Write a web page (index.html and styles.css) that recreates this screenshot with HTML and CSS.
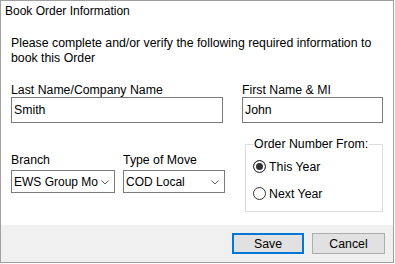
FILE: index.html
```html
<!DOCTYPE html>
<html lang="en">
<head>
    <meta charset="UTF-8">
    <meta name="viewport" content="width=device-width, initial-scale=1.0">
    <title>Book Order Information</title>
    <link rel="stylesheet" href="styles.css">
</head>
<body>
    <div class="dialog">
        <div class="title">Book Order Information</div>
        <div class="content">
            <p class="intro">Please complete and/or verify the following required information to book this Order</p>
            <div class="row row-names">
                <div class="field field-last">
                    <label class="label">Last Name/Company Name</label>
                    <input class="text-input" type="text" value="Smith">
                </div>
                <div class="field field-first">
                    <label class="label">First Name &amp; MI</label>
                    <input class="text-input" type="text" value="John">
                </div>
            </div>
            <div class="row row-details">
                <div class="field field-branch">
                    <label class="label label-select">Branch</label>
                    <div class="select">
                        <span class="select-text">EWS Group Mo</span>
                        <svg class="chevron" width="8" height="5" viewBox="0 0 8 5"><path d="M0.5 0.5 L4 4 L7.5 0.5" fill="none" stroke="#606060" stroke-width="1"/></svg>
                    </div>
                </div>
                <div class="field field-move">
                    <label class="label label-select">Type of Move</label>
                    <div class="select">
                        <span class="select-text">COD Local</span>
                        <svg class="chevron" width="8" height="5" viewBox="0 0 8 5"><path d="M0.5 0.5 L4 4 L7.5 0.5" fill="none" stroke="#606060" stroke-width="1"/></svg>
                    </div>
                </div>
                <fieldset class="order-from">
                    <legend>Order Number From:</legend>
                    <label class="radio-row"><input class="radio" type="radio" name="year" checked>This Year</label>
                    <label class="radio-row"><input class="radio" type="radio" name="year">Next Year</label>
                </fieldset>
            </div>
        </div>
        <div class="footer">
            <button class="btn btn-default">Save</button>
            <button class="btn">Cancel</button>
        </div>
    </div>
</body>
</html>
```

FILE: styles.css
```css
body{
    margin: 0;
    font-family: "Liberation Sans", Arial, sans-serif;
    font-size: 12.3px;
    color: #000;
    background-color: #fff;
}
.dialog{
    width: 394px;
    height: 263px;
    box-sizing: border-box;
    border: 1px solid #a0a0a0;
    display: flex;
    flex-direction: column;
    background-color: #fff;
}
.title{
    padding: 3px 4px 0;
    line-height: 15px;
    font-size: 12px;
}
.content{
    flex: 1;
    padding: 0 10px;
}
.intro{
    margin: 17px 0 0;
    line-height: 15px;
    width: 372px;
}
.row{
    display: flex;
    align-items: flex-start;
}
.row-names{
    margin-top: 18px;
    gap: 19px;
}
.row-details{
    margin-top: 14px;
}
.field{
    display: flex;
    flex-direction: column;
}
.label{
    line-height: 13px;
}
.label-select{
    margin-bottom: 4px;
}
.field-last{
    width: 214px;
}
.field-first{
    width: 141px;
}
.text-input{
    height: 26px;
    box-sizing: border-box;
    border: 1px solid #7a7a7a;
    padding: 0 2px;
    margin: 0;
    font: inherit;
    color: #000;
    outline: none;
}
.field-branch{
    width: 105px;
    margin-top: 17px;
}
.field-move{
    width: 103px;
    margin-top: 17px;
    margin-left: 8px;
}
.select{
    height: 23px;
    box-sizing: border-box;
    border: 1px solid #7a7a7a;
    display: flex;
    align-items: center;
    justify-content: space-between;
    padding: 0 5px 0 2px;
    font-size: 12px;
    white-space: nowrap;
    overflow: hidden;
}
.label-select + .select{
    margin-top: -1px;
}
.chevron{
    flex-shrink: 0;
    margin-top: 1px;
}
.order-from{
    width: 139px;
    box-sizing: border-box;
    margin: 0 0 0 20px;
    border: 1px solid #dcdcdc;
    padding: 0 7px 4px;
}
.order-from legend{
    padding: 0 1px;
    line-height: 15px;
}
.radio-row{
    height: 27px;
    display: flex;
    align-items: center;
}
.radio-row:first-of-type{
    margin-top: 1px;
}
.radio{
    appearance: none;
    width: 13px;
    height: 13px;
    margin: 0 3px 0 0;
    border: 1px solid #333;
    border-radius: 50%;
    background-color: #fff;
    box-sizing: border-box;
}
.radio:checked{
    background-color: #333;
    box-shadow: inset 0 0 0 2px #fff;
}
.footer{
    height: 37px;
    box-sizing: border-box;
    background-color: #f0f0f0;
    display: flex;
    justify-content: flex-end;
    align-items: flex-start;
    gap: 8px;
    padding: 8px 8px 0 0;
}
.btn{
    width: 73px;
    height: 21px;
    box-sizing: border-box;
    margin: 0;
    padding: 0;
    border: 1px solid #adadad;
    background-color: #e1e1e1;
    font: inherit;
    color: #000;
}
.btn-default{
    width: 72px;
    border: 2px solid #0078d7;
}
```
